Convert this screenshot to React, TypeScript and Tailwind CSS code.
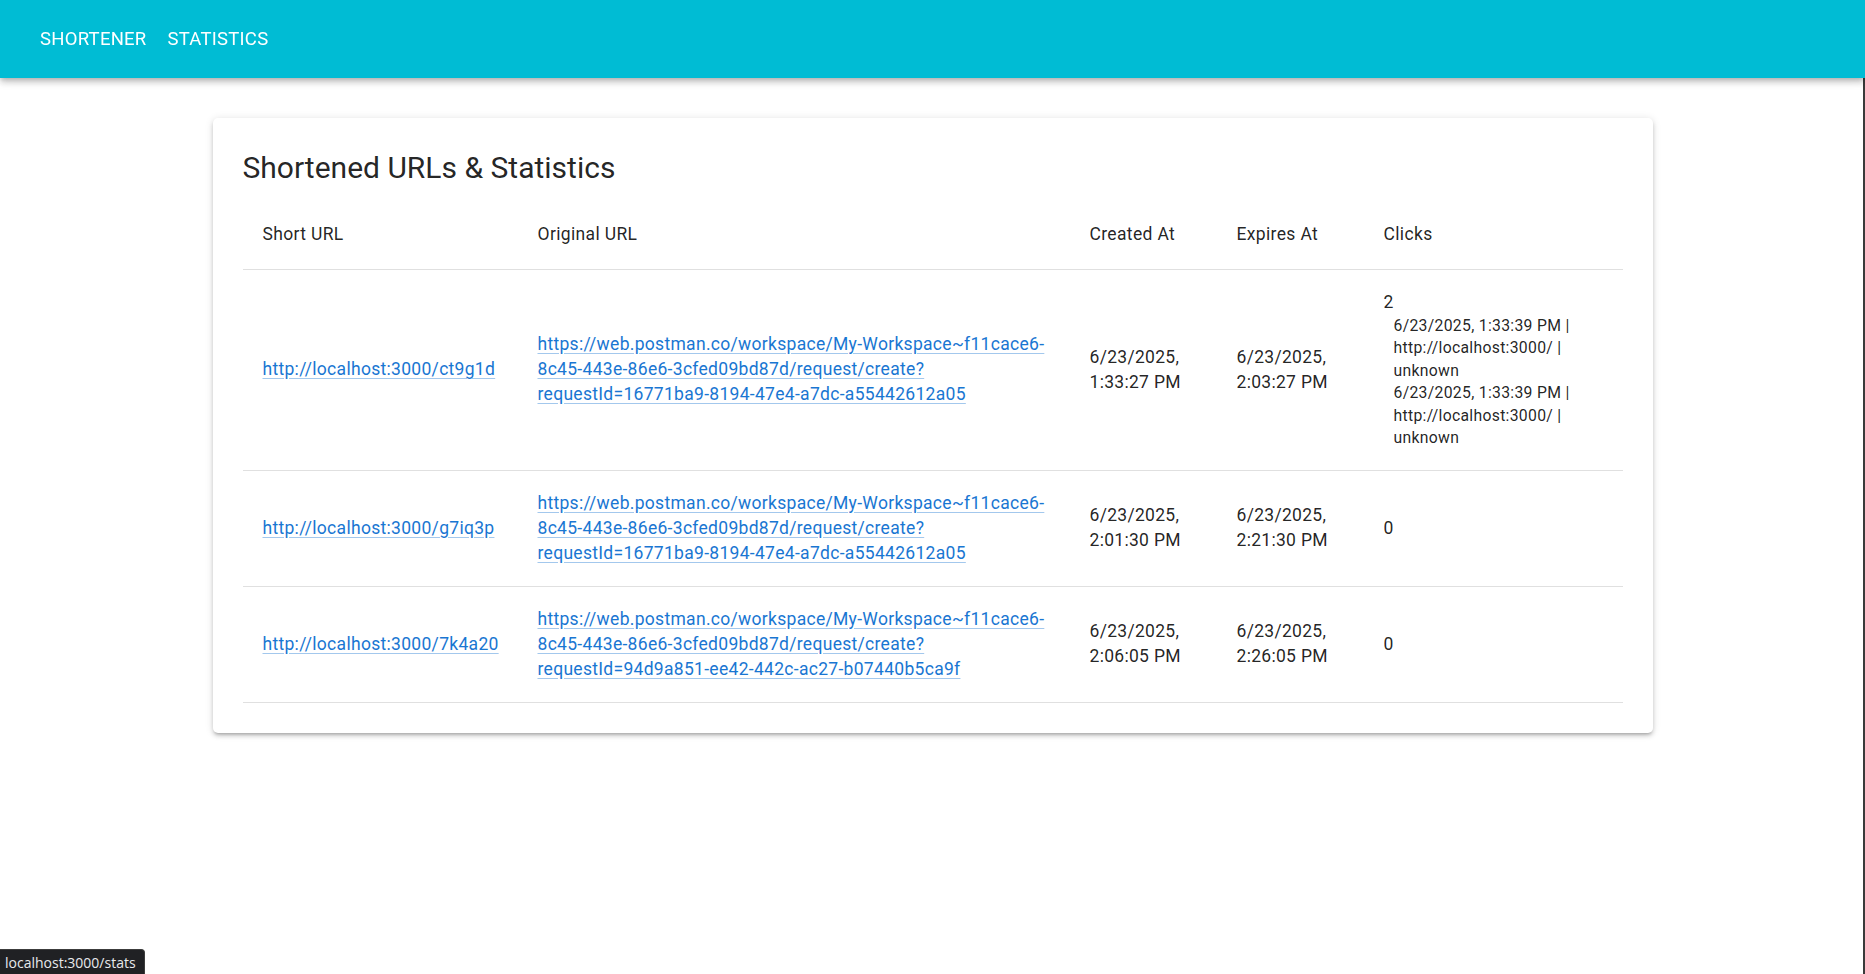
import React from "react";

type Row = {
  short: string;
  original: string;
  created: [string, string];
  expires: [string, string];
  clicks: number;
  details: string[];
};

const rows: Row[] = [
  {
    short: "http://localhost:3000/ct9g1d",
    original:
      "https://web.postman.co/workspace/My-Workspace~f11cace6-8c45-443e-86e6-3cfed09bd87d/request/create?requestId=16771ba9-8194-47e4-a7dc-a55442612a05",
    created: ["6/23/2025,", "1:33:27 PM"],
    expires: ["6/23/2025,", "2:03:27 PM"],
    clicks: 2,
    details: [
      "6/23/2025, 1:33:39 PM | http://localhost:3000/ | unknown",
      "6/23/2025, 1:33:39 PM | http://localhost:3000/ | unknown",
    ],
  },
  {
    short: "http://localhost:3000/g7iq3p",
    original:
      "https://web.postman.co/workspace/My-Workspace~f11cace6-8c45-443e-86e6-3cfed09bd87d/request/create?requestId=16771ba9-8194-47e4-a7dc-a55442612a05",
    created: ["6/23/2025,", "2:01:30 PM"],
    expires: ["6/23/2025,", "2:21:30 PM"],
    clicks: 0,
    details: [],
  },
  {
    short: "http://localhost:3000/7k4a20",
    original:
      "https://web.postman.co/workspace/My-Workspace~f11cace6-8c45-443e-86e6-3cfed09bd87d/request/create?requestId=94d9a851-ee42-442c-ac27-b07440b5ca9f",
    created: ["6/23/2025,", "2:06:05 PM"],
    expires: ["6/23/2025,", "2:26:05 PM"],
    clicks: 0,
    details: [],
  },
];

const linkCls =
  "text-[#1976d2] underline decoration-[rgba(25,118,210,0.4)] underline-offset-[3px]";

const cellCls =
  "p-[20px] text-[17.5px] leading-[25px] tracking-[0.3px] border-b border-[#e0e0e0]";

export default function App() {
  return (
    <div className="min-h-[974px] bg-white font-['Roboto',sans-serif] text-[rgba(0,0,0,0.87)]">
      <header className="h-[78px] bg-[#00bcd4] flex items-center pl-[30px] pr-[30px] pb-[1px] shadow-[0_2.5px_5px_-1.25px_rgba(0,0,0,0.2),0_5px_6px_0_rgba(0,0,0,0.14),0_1px_12px_0_rgba(0,0,0,0.12)] relative z-10">
        <nav className="flex gap-[1px]">
          <a className="px-[10px] py-[7px] text-white text-[18.5px] leading-[32px] font-normal tracking-[0.25px] uppercase min-w-[80px]">
            Shortener
          </a>
          <a className="px-[10px] py-[7px] text-white text-[18.5px] leading-[32px] font-normal tracking-[0.25px] uppercase min-w-[80px]">
            Statistics
          </a>
        </nav>
      </header>

      <main className="mx-auto max-w-[1500px] px-[30px]">
        <section className="mt-[40px] rounded-[5px] bg-white p-[30px] shadow-[0_3px_3px_-2px_rgba(0,0,0,0.2),0_3px_4px_0_rgba(0,0,0,0.14),0_1px_8px_0_rgba(0,0,0,0.12)]">
          <h1 className="text-[30px] leading-[40px] font-normal mb-[10.5px]">
            Shortened URLs &amp; Statistics
          </h1>
          <table className="w-full table-fixed border-collapse text-left">
            <colgroup>
              <col className="w-[275px]" />
              <col className="w-[552px]" />
              <col className="w-[147px]" />
              <col className="w-[147px]" />
              <col className="w-[259px]" />
            </colgroup>
            <thead>
              <tr>
                {["Short URL", "Original URL", "Created At", "Expires At", "Clicks"].map(
                  (h) => (
                    <th
                      key={h}
                      className="p-[20px] text-[17.5px] leading-[30px] font-normal tracking-[0.35px] border-b border-[#e0e0e0] align-middle"
                    >
                      {h}
                    </th>
                  )
                )}
              </tr>
            </thead>
            <tbody>
              {rows.map((r) => (
                <tr key={r.short} className="align-middle">
                  <td className={cellCls}>
                    <a className={linkCls} href="#">
                      {r.short}
                    </a>
                  </td>
                  <td className={cellCls}>
                    <a className={linkCls} href="#">
                      {r.original}
                    </a>
                  </td>
                  <td className={cellCls}>
                    {r.created[0]}
                    <br />
                    {r.created[1]}
                  </td>
                  <td className={cellCls}>
                    {r.expires[0]}
                    <br />
                    {r.expires[1]}
                  </td>
                  <td className={cellCls}>
                    <div>{r.clicks}</div>
                    {r.details.length > 0 && (
                      <ul className="pl-[10px] text-[15.75px] leading-[22.5px] tracking-[0.3px]">
                        {r.details.map((d, i) => (
                          <li key={i}>{d}</li>
                        ))}
                      </ul>
                    )}
                  </td>
                </tr>
              ))}
            </tbody>
          </table>
        </section>
      </main>

      <div className="fixed left-0 bottom-0 h-[25px] pl-[5px] pr-[8px] bg-[#202124] text-[#e8eaed] text-[14px] leading-[25px] font-['Open_Sans',sans-serif] rounded-tr-[4px] border-t border-r border-[#3c3c3c]">
        localhost:3000/stats
      </div>
      <div className="fixed right-0 top-0 h-full w-[2px] bg-[#3a3a3a]" />
    </div>
  );
}
